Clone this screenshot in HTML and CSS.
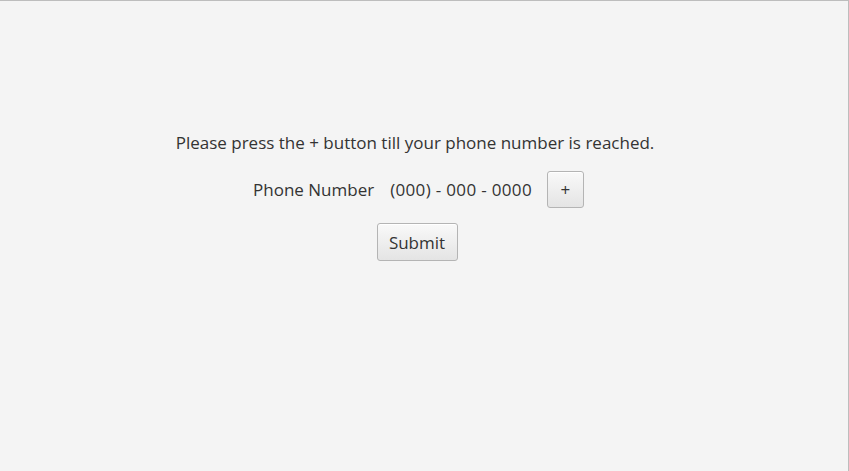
FILE: index.html
```html
<!DOCTYPE html>
<html>
<head>
<meta charset="utf-8">
<link rel="stylesheet" href="styles.css">
</head>
<body>
<div class="window">
  <div class="content">
    <p class="instructions">Please press the + button till your phone number is reached.</p>
    <div class="phone-row">
      <span class="label">Phone Number</span>
      <span class="number">(000) - 000 - 0000</span>
      <button class="btn btn-plus">+</button>
    </div>
    <button class="btn btn-submit">Submit</button>
  </div>
</div>
</body>
</html>
```
FILE: styles.css
```css
html, body {
  margin: 0;
  padding: 0;
  width: 849px;
  height: 471px;
  overflow: hidden;
}
body {
  font-family: "Open Sans", "Noto Sans", sans-serif;
  color: #333333;
  background: #f4f4f4;
}
.window {
  box-sizing: border-box;
  width: 849px;
  height: 471px;
  border-top: 1px solid #bdbdbd;
  border-right: 1px solid #bdbdbd;
  background: #f4f4f4;
}
.content {
  display: flex;
  flex-direction: column;
  align-items: center;
  padding-top: 131px;
  padding-right: 18px;
}
.instructions {
  margin: 0;
  font-size: 17px;
  line-height: 22px;
}
.phone-row {
  display: flex;
  align-items: center;
  margin-top: 17px;
  margin-left: 7px;
}
.label {
  font-size: 17px;
}
.number {
  font-size: 17px;
  margin-left: 16px;
  letter-spacing: 0.33px;
}
.btn {
  font-family: inherit;
  font-size: 17px;
  color: #333333;
  border: 1px solid #b4b4b4;
  border-radius: 3px;
  background: linear-gradient(#f9f9f9, #e4e4e4);
  box-shadow: inset 0 1px 0 #ffffff;
  padding: 0;
  cursor: default;
}
.btn-plus {
  width: 37px;
  height: 37px;
  margin-left: 15px;
}
.btn-submit {
  margin-top: 15px;
  margin-left: 4px;
  width: 81px;
  height: 38px;
}
```
